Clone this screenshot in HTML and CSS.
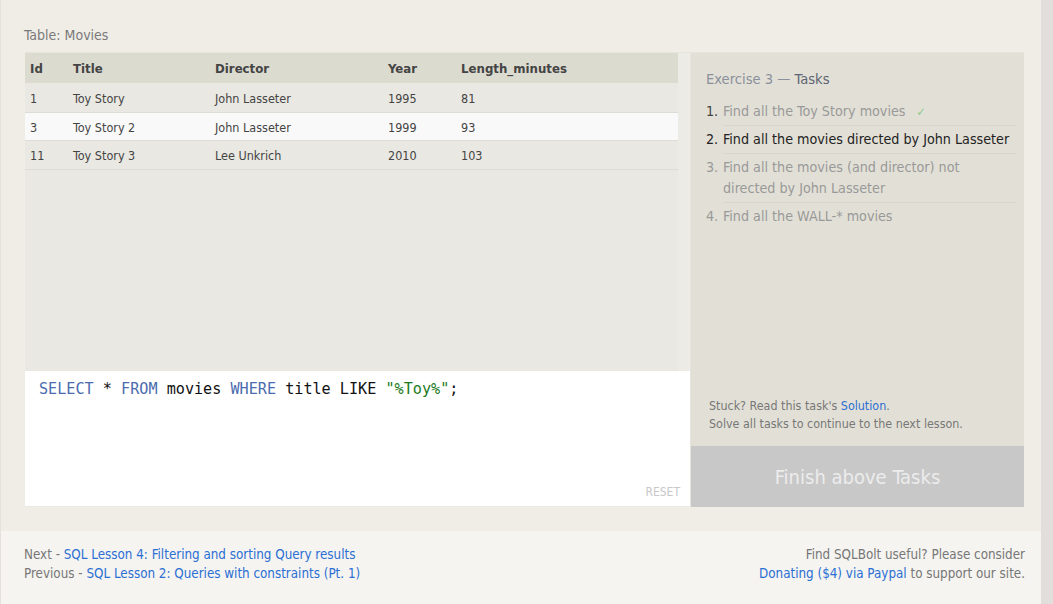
FILE: index.html
```html
<!DOCTYPE html>
<html>
<head>
<meta charset="utf-8">
<link rel="stylesheet" href="styles.css">
</head>
<body>
<div class="page">
  <div class="main">
    <div class="content">
      <div class="table-label">Table: Movies</div>
      <div class="panel">
        <div class="left">
          <div class="results">
            <div class="table-wrap">
              <table class="data">
                <thead>
                  <tr><th class="c-id">Id</th><th class="c-title">Title</th><th class="c-dir">Director</th><th class="c-year">Year</th><th>Length_minutes</th></tr>
                </thead>
                <tbody>
                  <tr><td>1</td><td>Toy Story</td><td>John Lasseter</td><td>1995</td><td>81</td></tr>
                  <tr class="alt"><td>3</td><td>Toy Story 2</td><td>John Lasseter</td><td>1999</td><td>93</td></tr>
                  <tr><td>11</td><td>Toy Story 3</td><td>Lee Unkrich</td><td>2010</td><td>103</td></tr>
                </tbody>
              </table>
            </div>
            <div class="track"></div>
          </div>
          <div class="editor">
            <div class="code"><span class="kw">SELECT</span> * <span class="kw">FROM</span> movies <span class="kw">WHERE</span> title LIKE <span class="str">"%Toy%"</span>;</div>
            <div class="reset">RESET</div>
          </div>
        </div>
        <div class="right">
          <div class="tasks">
            <div class="tasks-title">Exercise 3 — <span class="dark">Tasks</span></div>
            <ol class="task-list">
              <li class="done"><span class="num">1.</span><span class="txt">Find all the Toy Story movies <span class="check">✓</span></span></li>
              <li class="current"><span class="num">2.</span><span class="txt">Find all the movies directed by John Lasseter</span></li>
              <li><span class="num">3.</span><span class="txt">Find all the movies (and director) not directed by John Lasseter</span></li>
              <li class="last"><span class="num">4.</span><span class="txt">Find all the WALL-* movies</span></li>
            </ol>
          </div>
          <div class="help">
            <div>Stuck? Read this task's <a class="link">Solution</a>.</div>
            <div>Solve all tasks to continue to the next lesson.</div>
          </div>
          <div class="finish">Finish above Tasks</div>
        </div>
      </div>
    </div>
    <div class="footer">
      <div class="nav">
        <div>Next - <a class="link">SQL Lesson 4: Filtering and sorting Query results</a></div>
        <div>Previous - <a class="link">SQL Lesson 2: Queries with constraints (Pt. 1)</a></div>
      </div>
      <div class="donate">
        <div>Find SQLBolt useful? Please consider</div>
        <div><a class="link">Donating ($4) via Paypal</a> to support our site.</div>
      </div>
    </div>
  </div>
  <div class="scroll"></div>
</div>
</body>
</html>
```

FILE: styles.css
```css
html, body {
  margin: 0;
  padding: 0;
}
body {
  font-family: "DejaVu Sans Condensed", "DejaVu Sans", sans-serif;
  font-stretch: condensed;
  background: #f0ede6;
  color: #555;
}
.page {
  display: flex;
  width: 1053px;
  height: 604px;
  overflow: hidden;
}
.main {
  width: 1041px;
  display: flex;
  flex-direction: column;
  border-left: 1px solid #e4e1da;
  box-sizing: border-box;
}
.scroll {
  width: 12px;
  background: #e1dedc;
}
.content {
  background: #f0ede6;
  padding: 26px 0 24px 24px;
}
.table-label {
  font-size: 14px;
  color: #7a7a7a;
  line-height: 16px;
  height: 16px;
  margin: 1px 0 9px -1px;
}
.panel {
  display: flex;
  width: 999px;
  height: 455px;
  border-top: 1px solid #e6e4db;
  box-sizing: border-box;
}
.left {
  width: 665px;
  display: flex;
  flex-direction: column;
}
.results {
  height: 318px;
  display: flex;
  background: #e9e8e2;
}
.table-wrap {
  width: 653px;
}
.track {
  width: 12px;
  background: #ecebe6;
}
table.data {
  width: 100%;
  border-collapse: collapse;
  font-size: 12.5px;
  color: #444;
}
.data th {
  background: #dcdbd0;
  text-align: left;
  font-weight: bold;
  font-size: 13.1px;
  height: 30px;
  padding: 0 0 0 5px;
  color: #444;
}
.data td {
  height: 29px;
  padding: 2px 0 0 5px;
  box-sizing: border-box;
  border-bottom: 1px solid #dddcd6;
}
.data tr.alt td {
  height: 28px;
  padding-top: 2px;
  background: #f9f9f9;
}
.c-id { width: 38px; }
.c-title { width: 137px; }
.c-dir { width: 168px; }
.c-year { width: 68px; }
.editor {
  flex: 1;
  background: #fff;
  position: relative;
  border-bottom: 1px solid #ece9e1;
}
.code {
  font-family: "DejaVu Sans Mono", monospace;
  font-stretch: normal;
  font-size: 15.15px;
  color: #111;
  padding: 9px 0 0 14px;
  line-height: 18px;
}
.kw { color: #4b6cae; }
.str { color: #1d7a1d; }
.reset {
  position: absolute;
  right: 10px;
  bottom: 7px;
  font-size: 12px;
  color: #c8c8c8;
}
.right {
  flex: 1;
  background: #e2e0d6;
  display: flex;
  flex-direction: column;
  border-left: 1px solid #e6e4dc;
}
.tasks {
  flex: 1;
  padding: 16px 8px 0 15px;
}
.tasks-title {
  font-size: 14.6px;
  color: #8a8f9c;
  line-height: 20px;
  margin-bottom: 12px;
}
.tasks-title .dark { color: #5d6474; }
.task-list {
  list-style: none;
  margin: 0;
  padding: 0;
  font-size: 14.2px;
  color: #999;
}
.task-list li {
  display: flex;
  line-height: 21px;
}
.task-list .num {
  width: 17px;
  flex: none;
  color: #999;
}
.task-list .done .num { color: #444; }
.task-list .txt {
  flex: 1;
  border-bottom: 1px solid #d8d6cc;
  padding: 0 5px 3px 0;
  margin-bottom: 3px;
}
.task-list li.last .txt { border-bottom: none; }
.task-list .current { color: #222; }
.task-list .current .num { color: #222; }
.check {
  color: #8cc88c;
  font-size: 12px;
  line-height: 1;
  margin-left: 7px;
}
.help {
  font-size: 12.4px;
  line-height: 18px;
  color: #777;
  padding: 0 0 13px 18px;
}
.link {
  color: #2b6fd4;
  text-decoration: none;
}
.finish {
  height: 61px;
  background: #c8c8c8;
  color: #ececec;
  font-size: 20px;
  display: flex;
  align-items: center;
  justify-content: center;
}
.footer {
  flex: 1;
  background: #f5f4f0;
  display: flex;
  justify-content: space-between;
  padding: 14px 16px 0 23px;
  font-size: 13.3px;
  line-height: 19px;
  color: #777;
}
.donate {
  text-align: right;
}
```
